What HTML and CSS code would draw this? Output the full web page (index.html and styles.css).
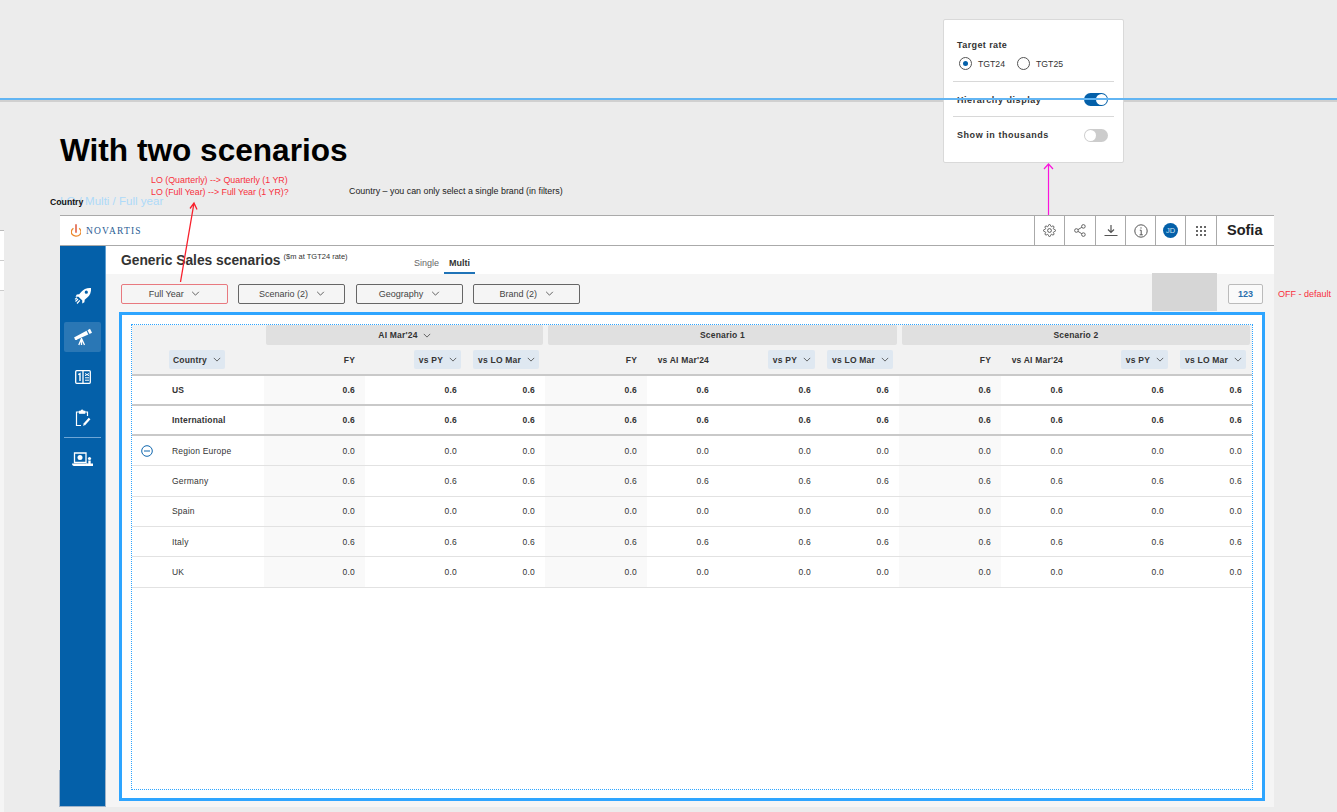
FILE: index.html
```html
<!DOCTYPE html>
<html lang="en">
<head>
    <meta charset="UTF-8">
    <title>With two scenarios</title>
    <link rel="stylesheet" href="styles.css">
</head>
<body>
    <svg width="0" height="0" class="defs">
        <symbol id="chev" viewBox="0 0 10 6"><path d="M1 1l4 4 4-4" fill="none" stroke="currentColor" stroke-width="1"/></symbol>
    </svg>

    <!-- Left edge of the neighbouring frame -->
    <div class="edge-frame">
        <div class="edge-row"></div>
        <div class="edge-row"></div>
    </div>

    <div class="guide-shadow"></div>

    <!-- Settings popover -->
    <div class="popover">
        <div class="pop-section">
            <div class="pop-title">Target rate</div>
            <div class="radios">
                <span class="radio on"></span><span class="radio-label">TGT24</span>
                <span class="radio"></span><span class="radio-label">TGT25</span>
            </div>
        </div>
        <div class="pop-row">
            <span>Hierarchy display</span>
            <span class="toggle on"></span>
        </div>
        <div class="pop-row last">
            <span>Show in thousands</span>
            <span class="toggle"></span>
        </div>
    </div>

    <div class="guide-line"></div>

    <h1 class="board-title">With two scenarios</h1>
    <div class="note-red">LO (Quarterly) --&gt; Quarterly (1 YR)<br>LO (Full Year) --&gt; Full Year (1 YR)?</div>
    <div class="note-black">Country – you can only select a single brand (in filters)</div>
    <div class="note-blue">LO / Multi / Full year</div>
    <div class="note-country">Country</div>
    <div class="note-off">OFF - default</div>

    <!-- App frame -->
    <div class="app">
        <header class="topbar">
            <div class="logo">
                <svg width="10" height="13" viewBox="0 0 10 13"><path d="M2.400 4.200C.4 5.800-.1 8.400 1 10.200c1.300 2.200 6 2.600 7.900.4 1.500-1.800 1.200-4.600-.7-6.400" fill="none" stroke="#ec8a2d" stroke-width="1.300"/><path d="M5 .3v8.500" stroke="#dc4a2a" stroke-width="1.400"/></svg>
                <span>NOVARTIS</span>
            </div>
            <div class="tools">
                <div class="tool w30">
                    <svg width="13" height="13" viewBox="0 0 24 24" fill="none" stroke="#555" stroke-width="1.800"><circle cx="12" cy="12" r="3.500"/><path d="M19.400 15a1.650 1.650 0 0 0 .33 1.820l.06.06a2 2 0 0 1 0 2.830 2 2 0 0 1-2.830 0l-.06-.06a1.650 1.650 0 0 0-1.820-.33 1.650 1.650 0 0 0-1 1.510V21a2 2 0 0 1-2 2 2 2 0 0 1-2-2v-.09A1.650 1.650 0 0 0 9 19.400a1.650 1.650 0 0 0-1.820.33l-.06.06a2 2 0 0 1-2.830 0 2 2 0 0 1 0-2.830l.06-.06a1.650 1.650 0 0 0 .33-1.820 1.650 1.650 0 0 0-1.510-1H3a2 2 0 0 1-2-2 2 2 0 0 1 2-2h.09A1.650 1.650 0 0 0 4.600 9a1.650 1.650 0 0 0-.33-1.820l-.06-.06a2 2 0 0 1 0-2.830 2 2 0 0 1 2.830 0l.06.06a1.650 1.650 0 0 0 1.820.33H9a1.650 1.650 0 0 0 1-1.510V3a2 2 0 0 1 2-2 2 2 0 0 1 2 2v.09a1.650 1.650 0 0 0 1 1.510 1.650 1.650 0 0 0 1.820-.33l.06-.06a2 2 0 0 1 2.830 0 2 2 0 0 1 0 2.830l-.06.06a1.650 1.650 0 0 0-.33 1.820V9a1.650 1.650 0 0 0 1.510 1H21a2 2 0 0 1 2 2 2 2 0 0 1-2 2h-.09a1.650 1.650 0 0 0-1.510 1z"/></svg>
                </div>
                <div class="tool w31">
                    <svg width="12" height="13" viewBox="0 0 12 13" fill="none" stroke="#555" stroke-width=".9"><circle cx="2.400" cy="6.500" r="1.800"/><circle cx="9.400" cy="2.400" r="1.800"/><circle cx="9.400" cy="10.600" r="1.800"/><path d="M4 5.600l3.800-2.300M4 7.400l3.800 2.300"/></svg>
                </div>
                <div class="tool w30">
                    <svg width="14" height="13" viewBox="0 0 14 13" fill="none" stroke="#555" stroke-width="1.200"><path d="M7 1v7.500M4 5.500L7 8.500l3-3M.5 11.500h13"/></svg>
                </div>
                <div class="tool w30">
                    <svg width="14" height="14" viewBox="0 0 14 14" fill="none" stroke="#555" stroke-width="1"><circle cx="7" cy="7" r="6.200"/><path d="M5.800 6.200H7.200V10.800M5.600 10.800h3.200M7 3.300v1.300"/></svg>
                </div>
                <div class="tool w30"><span class="avatar">JD</span></div>
                <div class="tool w31">
                    <svg width="10" height="10" viewBox="0 0 10 10" fill="#666"><rect x="0" y="0" width="2" height="2"/><rect x="4" y="0" width="2" height="2"/><rect x="8" y="0" width="2" height="2"/><rect x="0" y="4" width="2" height="2"/><rect x="4" y="4" width="2" height="2"/><rect x="8" y="4" width="2" height="2"/><rect x="0" y="8" width="2" height="2"/><rect x="4" y="8" width="2" height="2"/><rect x="8" y="8" width="2" height="2"/></svg>
                </div>
                <div class="brand">Sofia</div>
            </div>
        </header>

        <div class="app-body">
            <nav class="sidebar">
                <div class="nav-item">
                    <svg width="18" height="18" viewBox="0 0 18 18" fill="#fff"><path d="M17 1c-4-.4-7.300 1-9.600 3.700L5.200 7.300 2.800 7.600 1.500 9.800l3-.1L8.300 13.500l-.1 3 2.200-1.300.3-2.400 2.600-2.200C16 8.300 17.400 5 17 1zm-4.700 5.800a1.600 1.600 0 1 1 0-3.200 1.600 1.600 0 0 1 0 3.200z"/><path d="M4 12l-2.500 2.500M5.800 13.400L3 16.500M3 10.800L1 12.400" stroke="#fff" stroke-width="1.200" fill="none"/></svg>
                </div>
                <div class="nav-item active">
                    <svg width="20" height="18" viewBox="0 0 20 18" fill="#fff"><path d="M1 9.600L13.500 2.800 15.300 6.400 3 12z"/><path d="M14.500 2.200L17 .8 19 4.800 16.500 6z"/><circle cx="3" cy="10.800" r="1.300"/><path d="M8.500 10.500L5.800 17M8.500 10.500L11.500 17M8.500 10v7" stroke="#fff" stroke-width="1.300" fill="none"/></svg>
                </div>
                <div class="nav-item">
                    <svg width="16" height="14" viewBox="0 0 16 14" fill="none" stroke="#fff"><rect x=".7" y=".7" width="14.600" height="12.600" rx="1" stroke-width="1.300"/><path d="M8 1v12" stroke-width="1.300"/><path d="M3.300 4.600L5 3.600V11" stroke-width="1.400"/><path d="M10 3.500l4 2.200M14 3.500l-4 2.200M10 7.800h4M10 10.200h4" stroke-width="1"/></svg>
                </div>
                <div class="nav-item">
                    <svg width="16" height="18" viewBox="0 0 16 18" fill="none" stroke="#fff" stroke-width="1.200"><path d="M4 3H1.500v13.500H6M10 3h2.500v4"/><path d="M4.500 4.200V2.300H6c.2-1.500 2-1.500 2.200 0h1.500v1.900z" fill="#fff"/><path d="M9 15.700l5.600-6.200" stroke-width="2.300"/><path d="M8 17l.6-1.800 1 .9z" fill="#fff" stroke="none"/></svg>
                </div>
                <div class="nav-sep"></div>
                <div class="nav-item">
                    <svg width="21" height="15" viewBox="0 0 21 15" fill="#fff"><path d="M2.500 1h11.500v9.500H2.500z" fill="none" stroke="#fff" stroke-width="1.300"/><circle cx="8" cy="5.600" r="2.500"/><path d="M0 11.500h15.500c0 1.500-.8 2.500-2 2.500H2c-1.200 0-2-1-2-2.500z"/><circle cx="17.500" cy="6.500" r="1.600"/><path d="M16.300 8.500h2.400v3h2.300V14h-7v-2.500h2.300z"/></svg>
                </div>
            </nav>

            <main class="main">
                <div class="subheader">
                    <div class="page-title">
                        <h2>Generic Sales scenarios</h2>
                        <span class="sup">($m at TGT24 rate)</span>
                    </div>
                    <div class="tabs">
                        <span class="tab">Single</span>
                        <span class="tab selected">Multi</span>
                    </div>
                </div>

                <div class="filters">
                    <button class="filter red">Full Year <svg class="chevron"><use href="#chev"/></svg></button>
                    <button class="filter">Scenario (2) <svg class="chevron"><use href="#chev"/></svg></button>
                    <button class="filter">Geography <svg class="chevron"><use href="#chev"/></svg></button>
                    <button class="filter">Brand (2) <svg class="chevron"><use href="#chev"/></svg></button>
                    <div class="gray-block"></div>
                    <button class="num-btn">123</button>
                </div>

                <section class="table-frame">
                    <div class="table-dotted">
                        <div class="t-head">
                            <div class="t-groups">
                                <div class="group first">AI Mar'24 <svg class="chevron small"><use href="#chev"/></svg></div>
                                <div class="group mid">Scenario 1</div>
                                <div class="group last">Scenario 2</div>
                            </div>
                            <div class="t-row t-cols">
                                <div class="name"><span class="chip country">Country <svg class="chevron small"><use href="#chev"/></svg></span></div>
                                <div class="c fy">FY</div>
                                <div class="c a"><span class="chip">vs PY <svg class="chevron small"><use href="#chev"/></svg></span></div>
                                <div class="c l"><span class="chip">vs LO Mar <svg class="chevron small"><use href="#chev"/></svg></span></div>
                                <div class="c fy">FY</div>
                                <div class="c a">vs AI Mar'24</div>
                                <div class="c a"><span class="chip">vs PY <svg class="chevron small"><use href="#chev"/></svg></span></div>
                                <div class="c l"><span class="chip">vs LO Mar <svg class="chevron small"><use href="#chev"/></svg></span></div>
                                <div class="c fy">FY</div>
                                <div class="c a">vs AI Mar'24</div>
                                <div class="c a"><span class="chip">vs PY <svg class="chevron small"><use href="#chev"/></svg></span></div>
                                <div class="c l"><span class="chip">vs LO Mar <svg class="chevron small"><use href="#chev"/></svg></span></div>
                            </div>
                        </div>

                        <div class="t-row strong">
                            <div class="name">US</div>
                            <div class="c v fy shade">0.6</div><div class="c v a">0.6</div><div class="c v l">0.6</div>
                            <div class="c v fy shade">0.6</div><div class="c v a">0.6</div><div class="c v a">0.6</div><div class="c v l">0.6</div>
                            <div class="c v fy shade">0.6</div><div class="c v a">0.6</div><div class="c v a">0.6</div><div class="c v l">0.6</div>
                        </div>
                        <div class="t-row strong intl">
                            <div class="name">International</div>
                            <div class="c v fy shade">0.6</div><div class="c v a">0.6</div><div class="c v l">0.6</div>
                            <div class="c v fy shade">0.6</div><div class="c v a">0.6</div><div class="c v a">0.6</div><div class="c v l">0.6</div>
                            <div class="c v fy shade">0.6</div><div class="c v a">0.6</div><div class="c v a">0.6</div><div class="c v l">0.6</div>
                        </div>
                        <div class="t-row">
                            <div class="name">
                                <svg class="collapse" width="12" height="12" viewBox="0 0 12 12" fill="none" stroke="#0f66ad" stroke-width="1"><circle cx="6" cy="6" r="5.300"/><path d="M3 6h6"/></svg>
                                Region Europe
                            </div>
                            <div class="c v fy shade">0.0</div><div class="c v a">0.0</div><div class="c v l">0.0</div>
                            <div class="c v fy shade">0.0</div><div class="c v a">0.0</div><div class="c v a">0.0</div><div class="c v l">0.0</div>
                            <div class="c v fy shade">0.0</div><div class="c v a">0.0</div><div class="c v a">0.0</div><div class="c v l">0.0</div>
                        </div>
                        <div class="t-row">
                            <div class="name">Germany</div>
                            <div class="c v fy shade">0.6</div><div class="c v a">0.6</div><div class="c v l">0.6</div>
                            <div class="c v fy shade">0.6</div><div class="c v a">0.6</div><div class="c v a">0.6</div><div class="c v l">0.6</div>
                            <div class="c v fy shade">0.6</div><div class="c v a">0.6</div><div class="c v a">0.6</div><div class="c v l">0.6</div>
                        </div>
                        <div class="t-row">
                            <div class="name">Spain</div>
                            <div class="c v fy shade">0.0</div><div class="c v a">0.0</div><div class="c v l">0.0</div>
                            <div class="c v fy shade">0.0</div><div class="c v a">0.0</div><div class="c v a">0.0</div><div class="c v l">0.0</div>
                            <div class="c v fy shade">0.0</div><div class="c v a">0.0</div><div class="c v a">0.0</div><div class="c v l">0.0</div>
                        </div>
                        <div class="t-row">
                            <div class="name">Italy</div>
                            <div class="c v fy shade">0.6</div><div class="c v a">0.6</div><div class="c v l">0.6</div>
                            <div class="c v fy shade">0.6</div><div class="c v a">0.6</div><div class="c v a">0.6</div><div class="c v l">0.6</div>
                            <div class="c v fy shade">0.6</div><div class="c v a">0.6</div><div class="c v a">0.6</div><div class="c v l">0.6</div>
                        </div>
                        <div class="t-row">
                            <div class="name">UK</div>
                            <div class="c v fy shade">0.0</div><div class="c v a">0.0</div><div class="c v l">0.0</div>
                            <div class="c v fy shade">0.0</div><div class="c v a">0.0</div><div class="c v a">0.0</div><div class="c v l">0.0</div>
                            <div class="c v fy shade">0.0</div><div class="c v a">0.0</div><div class="c v a">0.0</div><div class="c v l">0.0</div>
                        </div>
                    </div>
                </section>
            </main>
        </div>
    </div>

    <!-- Annotation arrows drawn over the frame -->
    <svg class="arrows" width="1337" height="812" viewBox="0 0 1337 812" fill="none">
        <path d="M180.500 282L194 203M190 208.500L194 203L197 209.500" stroke="#f8202c" stroke-width="1.300"/>
        <path d="M1048.500 215V164M1044 169L1048.500 164L1053 169" stroke="#fa14dc" stroke-width="1.200"/>
    </svg>
</body>
</html>
```

FILE: styles.css
```css
* {
    box-sizing: border-box;
}
body {
    margin: 0;
    width: 1337px;
    height: 812px;
    position: relative;
    overflow: hidden;
    background: #ececec;
    font-family: "Liberation Sans", Arial, sans-serif;
    color: #333;
}
.defs {
    position: absolute;
}

/* Free canvas items */
.edge-frame {
    position: absolute;
    left: 0;
    top: 230px;
    width: 4px;
    height: 582px;
    background: #f5f5f5;
    border-top: 1px solid #bbb;
}
.edge-row {
    height: 30px;
    background: #fff;
    border-bottom: 1px solid #ccc;
}
.guide-shadow {
    position: absolute;
    left: 0;
    top: 100px;
    width: 1337px;
    height: 2px;
    background: #d0d0d0;
}
.guide-line {
    position: absolute;
    left: 0;
    top: 98px;
    width: 1337px;
    height: 2px;
    background: #62b5f3;
}
.board-title {
    position: absolute;
    left: 60px;
    top: 131px;
    margin: 0;
    font-size: 31.600px;
    line-height: 38px;
    font-weight: bold;
    color: #000;
}
.note-red {
    position: absolute;
    left: 151px;
    top: 174px;
    font-size: 8.850px;
    line-height: 12px;
    color: #f8303c;
}
.note-black {
    position: absolute;
    left: 349px;
    top: 185px;
    font-size: 8.880px;
    line-height: 12px;
    color: #222;
}
.note-blue {
    position: absolute;
    left: 60px;
    top: 194px;
    font-size: 11.550px;
    line-height: 14px;
    color: #aedaf9;
}
.note-country {
    position: absolute;
    left: 50px;
    top: 197px;
    font-size: 8.700px;
    line-height: 11px;
    font-weight: bold;
    color: #111;
}
.note-off {
    position: absolute;
    left: 1278px;
    top: 288px;
    font-size: 9px;
    line-height: 12px;
    color: #f8303c;
}
.arrows {
    position: absolute;
    left: 0;
    top: 0;
    pointer-events: none;
}

/* Popover */
.popover {
    position: absolute;
    left: 943px;
    top: 19px;
    width: 181px;
    height: 144px;
    padding: 0 9px;
    background: #fff;
    border: 1px solid #d9d9d9;
    border-radius: 2px;
}
.pop-section {
    height: 62px;
    padding: 19px 4px 0;
    border-bottom: 1px solid #d8d8d8;
}
.pop-title {
    font-size: 9px;
    line-height: 12px;
    font-weight: bold;
    letter-spacing: .4px;
}
.radios {
    display: flex;
    align-items: center;
    margin-top: 6px;
    padding-left: 2px;
}
.radio {
    width: 13px;
    height: 13px;
    border: 1px solid #555;
    border-radius: 50%;
    position: relative;
}
.radio.on::after {
    content: "";
    position: absolute;
    left: 3px;
    top: 3px;
    width: 5px;
    height: 5px;
    background: #0460a9;
    border-radius: 50%;
}
.radio-label {
    font-size: 8.700px;
    margin: 0 12px 0 6px;
}
.pop-row {
    height: 35px;
    padding: 1px 6px 0 4px;
    display: flex;
    align-items: center;
    justify-content: space-between;
    font-size: 9px;
    font-weight: bold;
    letter-spacing: .55px;
    border-bottom: 1px solid #d8d8d8;
}
.pop-row.last {
    border-bottom: none;
}
.toggle {
    width: 24px;
    height: 13px;
    border-radius: 7px;
    background: #ccc;
    position: relative;
}
.toggle::after {
    content: "";
    position: absolute;
    left: 1px;
    top: 1px;
    width: 11px;
    height: 11px;
    background: #fff;
    border-radius: 50%;
}
.toggle.on {
    background: #0460a9;
}
.toggle.on::after {
    left: 12px;
}

/* App frame */
.app {
    position: absolute;
    left: 60px;
    top: 215px;
    width: 1214px;
    height: 592px;
    background: #f5f5f5;
}
.topbar {
    height: 31px;
    display: flex;
    justify-content: space-between;
    background: #fff;
    border-top: 1px solid #aaa;
    border-bottom: 1px solid #aaa;
}
.logo {
    display: flex;
    align-items: center;
    padding-left: 11px;
    gap: 5px;
}
.logo span {
    font-family: "Liberation Serif", serif;
    font-size: 9.500px;
    letter-spacing: 1.200px;
    color: #2a5d94;
}
.tools {
    display: flex;
}
.tool {
    display: flex;
    align-items: center;
    justify-content: center;
    border-left: 1px solid #aaa;
}
.w30 {
    width: 30px;
}
.w31 {
    width: 31px;
}
.avatar {
    width: 15px;
    height: 15px;
    border-radius: 50%;
    background: #0460a9;
    color: #cfe2f3;
    font-size: 7.500px;
    line-height: 15px;
    text-align: center;
}
.brand {
    width: 58px;
    padding-left: 10px;
    border-left: 1px solid #aaa;
    font-size: 14.500px;
    line-height: 29px;
    font-weight: bold;
    color: #222;
}
.app-body {
    display: flex;
    height: 561px;
}

/* Sidebar */
.sidebar {
    position: relative;
    width: 46px;
    height: 560px;
    padding: 35px 4px 0;
    background: #0460a9;
    border-right: 1px solid #5f9fd2;
}
.sidebar::after {
    content: "";
    position: absolute;
    left: -1px;
    right: -1px;
    bottom: -1px;
    height: 36px;
    border: 1px solid #9fb4ca;
    border-top: none;
}
.nav-item {
    height: 30px;
    margin-bottom: 10.500px;
    display: flex;
    align-items: center;
    justify-content: center;
    border-radius: 2px;
}
.nav-item.active {
    background: #2a77b5;
}
.nav-sep {
    height: 1px;
    margin: -6px 0 6px;
    background: #6ea6d6;
}

/* Main column */
.main {
    flex: 1;
}
.subheader {
    height: 28px;
    padding-left: 15px;
    display: flex;
    background: #fff;
}
.page-title {
    width: 288px;
    display: flex;
    align-items: flex-start;
    padding-top: 7px;
}
.page-title h2 {
    margin: 0;
    font-size: 13.800px;
    line-height: 16px;
    color: #333;
}
.sup {
    font-size: 7.500px;
    line-height: 9px;
    margin: -1px 0 0 3px;
}
.tabs {
    display: flex;
    align-items: flex-end;
}
.tab {
    height: 18px;
    padding: 0 5px;
    font-size: 9px;
    line-height: 14px;
    color: #666;
}
.tab.selected {
    font-weight: bold;
    color: #333;
    border-bottom: 2px solid #1f73b7;
}
.filters {
    height: 38px;
    padding: 10px 11px 0 15px;
    display: flex;
    align-items: flex-start;
    gap: 10.330px;
}
.filter {
    width: 107px;
    height: 20px;
    padding: 0;
    background: #f5f5f5;
    border: 1px solid #666;
    border-radius: 2px;
    font-family: inherit;
    font-size: 9px;
    color: #444;
}
.filter.red {
    border-color: #e8797f;
}
.chevron {
    width: 9px;
    height: 5px;
    margin-left: 5px;
    vertical-align: 1px;
    color: #444;
}
.chevron.small {
    width: 8px;
    height: 5px;
}
.gray-block {
    width: 65px;
    height: 38px;
    margin: -11px 1px 0 auto;
    background: #d6d6d6;
}
.num-btn {
    width: 35px;
    height: 20px;
    padding: 0;
    background: #fafafa;
    border: 1px solid #bbb;
    border-radius: 2px;
    font-family: inherit;
    font-size: 9px;
    font-weight: bold;
    color: #2a6fad;
}

/* Table */
.table-frame {
    width: 1146px;
    height: 489px;
    margin-left: 13px;
    padding: 9px 9px 8px;
    background: #fff;
    border: 3px solid #2ea5ff;
}
.table-dotted {
    height: 100%;
    border: 1px dotted #2ea5ff;
}
.t-head {
    background: #f2f2f2;
}
.t-groups {
    height: 20px;
    padding-left: 132px;
    display: grid;
    grid-template-columns: 281px 354px 353px;
}
.group {
    display: flex;
    align-items: center;
    justify-content: center;
    background: #e0e0e0;
    border-radius: 2px;
    font-size: 8.500px;
    font-weight: bold;
    letter-spacing: .2px;
}
.group.first {
    margin: 0 2px 0 2px;
}
.group.mid,
.group.last {
    margin: 0 2px 0 3px;
}
.t-row {
    height: 30.300px;
    display: grid;
    grid-template-columns: 132px 101px 96px 84px 102px 66px 102px 84px 102px 66px 101px 84px;
    font-size: 8.500px;
    letter-spacing: .2px;
    border-bottom: 1px solid #e2e2e2;
}
.t-row.strong,
.t-row.t-cols {
    font-weight: bold;
    border-bottom: 2px solid #c9c9c9;
}
.t-row.t-cols {
    height: 30.500px;
    padding-top: 1px;
}
.t-row.intl .name,
.t-row.intl .c {
    padding-top: 1px;
}
.name {
    position: relative;
    display: flex;
    align-items: center;
    padding-left: 40px;
}
.collapse {
    position: absolute;
    left: 9px;
    top: 9px;
}
.c {
    display: flex;
    align-items: center;
    justify-content: flex-end;
}
.c.fy {
    padding-right: 10px;
}
.c.a {
    padding-right: 4px;
}
.c.l {
    padding-right: 6px;
}
.c.v.l {
    padding-right: 10px;
}
.shade {
    background: #f9f9f9;
}
.chip {
    height: 19px;
    padding: 0 4px 0 5px;
    display: flex;
    align-items: center;
    background: #dfe8f1;
    border-radius: 2px;
    margin-right: -4px;
}
.c.l .chip {
    margin-right: 0;
}
.chip.country {
    margin: 0 0 0 -3px;
    padding-left: 4px;
}
.chip .chevron {
    margin-left: 6px;
    vertical-align: 0;
}
```
